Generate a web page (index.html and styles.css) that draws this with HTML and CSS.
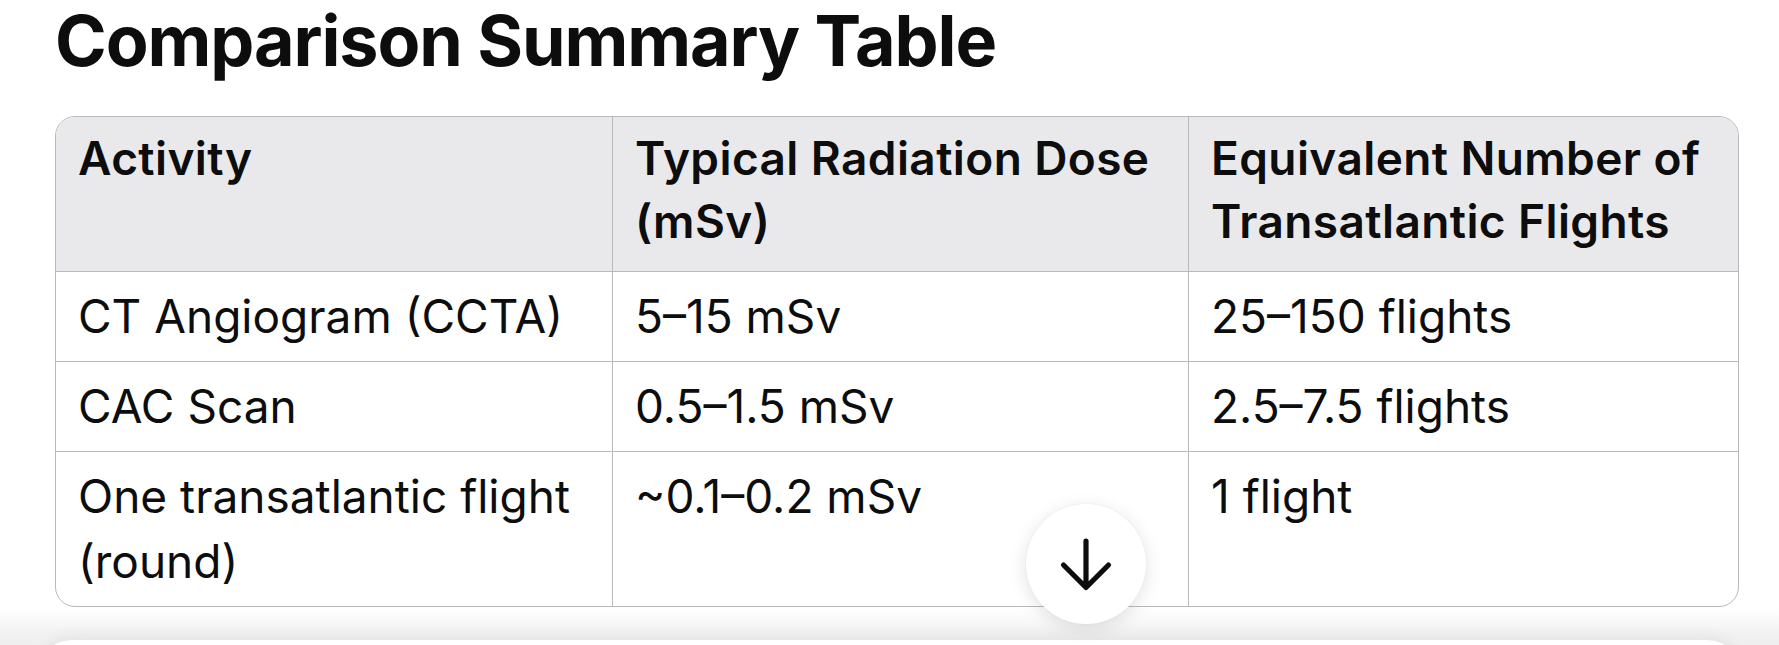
FILE: index.html
```html
<!DOCTYPE html>
<html lang="en">
<head>
<meta charset="utf-8">
<title>Comparison Summary Table</title>
<link rel="stylesheet" href="styles.css">
</head>
<body>
<main class="page">
  <h1 class="title">Comparison Summary Table</h1>
  <div class="table-wrap">
    <table class="summary">
      <colgroup>
        <col class="c1">
        <col class="c2">
        <col class="c3">
      </colgroup>
      <thead>
        <tr>
          <th>Activity</th>
          <th>Typical Radiation Dose (mSv)</th>
          <th>Equivalent Number of Transatlantic Flights</th>
        </tr>
      </thead>
      <tbody>
        <tr>
          <td>CT Angiogram (CCTA)</td>
          <td>5–15 mSv</td>
          <td>25–150 flights</td>
        </tr>
        <tr>
          <td>CAC Scan</td>
          <td>0.5–1.5 mSv</td>
          <td>2.5–7.5 flights</td>
        </tr>
        <tr>
          <td>One transatlantic flight (round)</td>
          <td>~0.1–0.2 mSv</td>
          <td>1 flight</td>
        </tr>
      </tbody>
    </table>
  </div>
</main>
<div class="bottom-fade"></div>
<div class="composer"></div>
<button class="scroll-down" aria-label="Scroll down">
  <svg viewBox="0 0 120 120" width="120" height="120" aria-hidden="true">
    <path d="M60 37 V83 M37.5 61 L60 83.5 L82.5 61" fill="none" stroke="#0d0d0d" stroke-width="5.2" stroke-linecap="round" stroke-linejoin="round"/>
  </svg>
</button>
</body>
</html>
```
FILE: styles.css
```css
html, body {
  margin: 0;
  padding: 0;
  background: #ffffff;
  height: 645px;
  overflow: hidden;
}

body {
  position: relative;
  font-family: Inter, "Noto Sans", "Liberation Sans", sans-serif;
  color: #0d0d0d;
}

.page {
  padding: 0 40px 0 55px;
}

.title {
  margin: 0;
  font-size: 70px;
  line-height: 82px;
  font-weight: 700;
  letter-spacing: -1.1px;
  color: #0d0d0d;
}

.table-wrap {
  margin-top: 34px;
  width: 1684px;
  box-sizing: border-box;
  border: 1.5px solid #b9b9b9;
  border-radius: 20px;
  overflow: hidden;
}

.summary {
  width: 100%;
  border-collapse: separate;
  border-spacing: 0;
  table-layout: fixed;
}

.c1 { width: 557px; }
.c2 { width: 576px; }

.summary th,
.summary td {
  text-align: left;
  vertical-align: top;
  font-size: 46px;
  line-height: 65px;
  padding: 12px 22px 12px 22px;
  border-right: 1.5px solid #b9b9b9;
  border-top: 1.5px solid #b9b9b9;
  letter-spacing: 0;
}

.summary th:last-child,
.summary td:last-child {
  border-right: none;
}

.summary thead th {
  border-top: none;
  background: #e9e9eb;
  font-weight: 600;
  line-height: 63px;
  letter-spacing: 0.4px;
  padding-top: 10px;
  padding-bottom: 18px;
}

.summary td {
  font-weight: 400;
}

.bottom-fade {
  position: absolute;
  left: 0;
  right: 0;
  top: 608px;
  height: 37px;
  background: linear-gradient(to bottom, rgba(240,240,240,0) 0%, #f2f2f2 65%, #efefef 100%);
}

.composer {
  position: absolute;
  left: 38px;
  right: 38px;
  top: 640px;
  height: 80px;
  background: #ffffff;
  border-radius: 34px;
  box-shadow: 0 -4px 14px rgba(0,0,0,0.05);
}

.scroll-down {
  position: absolute;
  left: 1026px;
  top: 504px;
  width: 120px;
  height: 120px;
  padding: 0;
  border: none;
  border-radius: 50%;
  background: #ffffff;
  box-shadow: 0 4px 18px rgba(0,0,0,0.12), 0 0 2px rgba(0,0,0,0.06);
  display: flex;
  align-items: center;
  justify-content: center;
}

.scroll-down svg {
  display: block;
  width: 120px;
  height: 120px;
}
```
